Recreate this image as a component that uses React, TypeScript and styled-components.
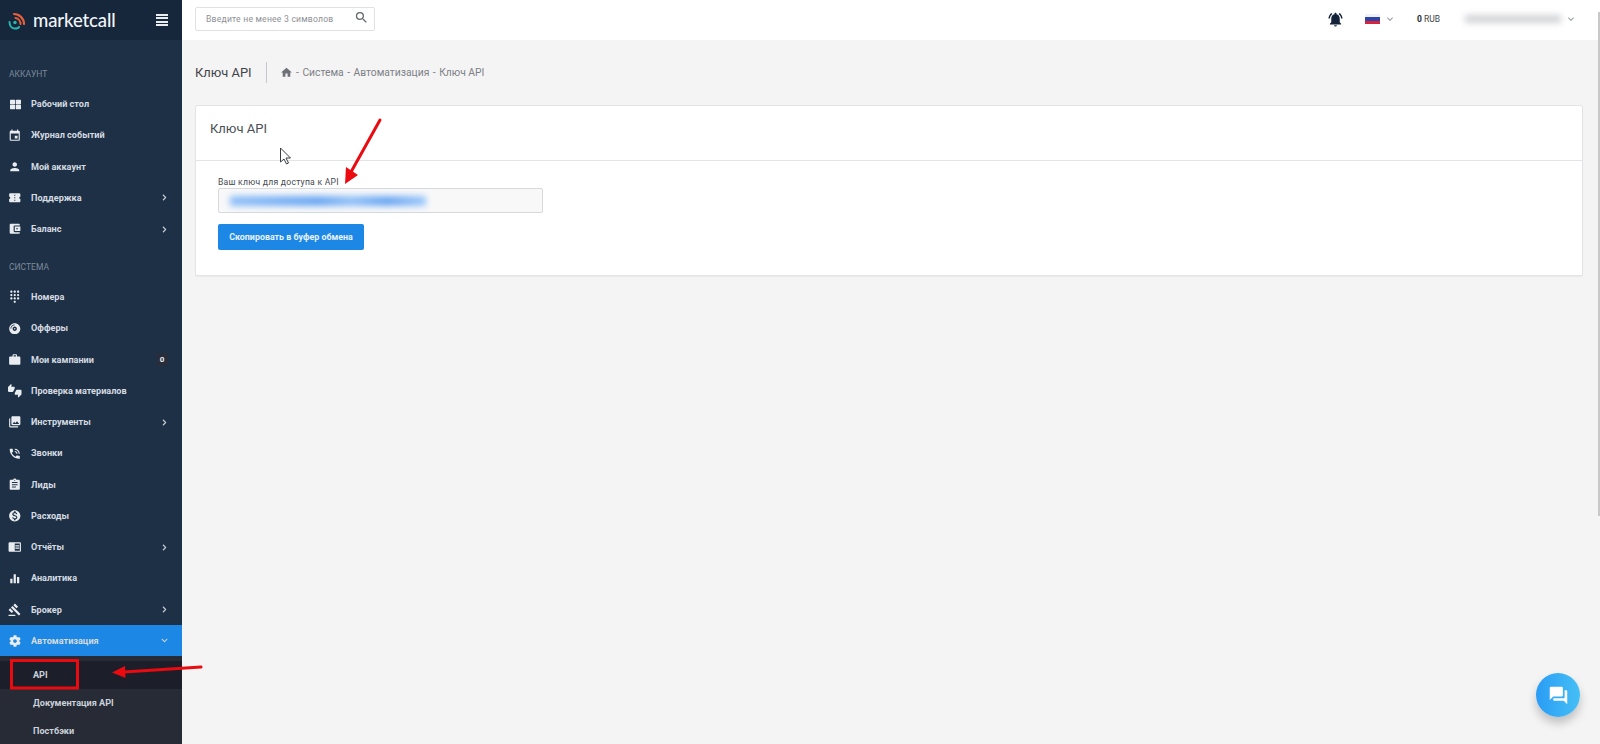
import React from "react";
import styled, { createGlobalStyle } from "styled-components";
import { FaThLarge, FaCompactDisc, FaCog, FaChevronRight, FaChevronDown } from "react-icons/fa";
import {
  MdEvent, MdPerson, MdDialpad, MdThumbsUpDown, MdPhotoLibrary, MdPhoneInTalk, MdAssignment,
  MdMonetizationOn, MdEqualizer, MdNotificationsActive, MdHome, MdSearch, MdQuestionAnswer, MdExpandMore,
  MdConfirmationNumber, MdAccountBalanceWallet, MdWork, MdChromeReaderMode, MdGavel,
} from "react-icons/md";

const GlobalStyle = createGlobalStyle`
  html, body { margin: 0; padding: 0; height: 100%; overflow: hidden; }
  body { font-family: Roboto, "Liberation Sans", sans-serif; background: #f4f4f4; }
`;

const Page = styled.div`
  position: relative;
  display: flex;
  width: 1600px;
  height: 744px;
  overflow: hidden;
`;

const Sidebar = styled.aside`
  width: 182px;
  flex-shrink: 0;
  height: 744px;
  overflow: hidden;
  background: #1e3045;
`;

const Brand = styled.div`
  display: flex;
  align-items: center;
  height: 40px;
  padding: 0 14px 0 8px;
  background: #16263b;
`;

const BrandName = styled.span`
  margin-left: 7px;
  flex: 1;
  font-family: Lato, sans-serif;
  font-size: 18.5px;
  font-weight: 500;
  letter-spacing: -0.1px;
  color: #f2f5f8;
`;

const Burger = styled.div`
  display: flex;
  flex-direction: column;
  gap: 1.5px;
  width: 12px;
  span { display: block; height: 2px; background: #e8ecf0; }
`;

const Nav = styled.nav`
  padding-top: 11.6px;
`;

const SectionLabel = styled.div`
  height: 36.8px;
  padding: 16px 0 0 9px;
  box-sizing: border-box;
  font-size: 8.5px;
  line-height: 12px;
  color: #7b8a9c;
`;

const Row = styled.div<{ $active?: boolean }>`
  display: flex;
  align-items: center;
  height: 31.25px;
  padding: 0 14px 0 8px;
  box-sizing: border-box;
  color: #d5dbe2;
  background: ${({ $active }) => ($active ? "#1c87e4" : "transparent")};
`;

const RowIcon = styled.span`
  display: flex;
  align-items: center;
  justify-content: center;
  width: 14px;
  height: 14px;
  margin-right: 9px;
  color: #e9edf1;
  font-size: 13.5px;
`;

const RowLabel = styled.span`
  flex: 1;
  font-size: 9.1px;
  font-weight: 700;
  white-space: nowrap;
  color: #d5dbe2;
`;

const Count = styled.span`
  width: 12px;
  height: 13px;
  border-radius: 2px;
  background: #282d3b;
  color: #eef0f3;
  font-size: 8px;
  font-weight: 700;
  line-height: 13px;
  text-align: center;
`;

const Caret = styled.span`
  display: flex;
  color: #ccd3db;
  font-size: 7px;
`;

const SubMenu = styled.div`
  padding-top: 5px;
  background: #262b36;
`;

const SubRow = styled.div<{ $active?: boolean }>`
  height: 28px;
  padding-left: 33px;
  font-size: 9.1px;
  font-weight: 700;
  line-height: 28px;
  color: #ccd2da;
  background: ${({ $active }) => ($active ? "#1c1f2a" : "transparent")};
`;

const Main = styled.main`
  flex: 1;
  min-width: 0;
  display: flex;
  flex-direction: column;
`;

const TopBar = styled.header`
  display: flex;
  align-items: center;
  height: 40px;
  padding: 0 23px 2px 13px;
  box-sizing: border-box;
  background: #fff;
`;

const SearchBox = styled.div`
  display: flex;
  align-items: center;
  justify-content: space-between;
  width: 180px;
  height: 24px;
  padding: 0 5px 0 10px;
  box-sizing: border-box;
  border: 1px solid #dfe1e5;
  border-radius: 2px;
  font-size: 8.6px;
  letter-spacing: 0.22px;
  color: #8d9096;
`;

const SearchIcon = styled.span`
  display: flex;
  margin-bottom: 4px;
  font-size: 15px;
  color: #63676d;
`;

const TopRight = styled.div`
  margin-left: auto;
  display: flex;
  align-items: center;
`;

const Bell = styled.span`
  display: flex;
  font-size: 17px;
  color: #15233a;
  margin-right: 21px;
`;

const Flag = styled.span`
  display: block;
  width: 15px;
  height: 10px;
  background: linear-gradient(#f1f1f4 0 33%, #2b46a8 33% 66%, #d8243a 66%);
`;

const SmallChevron = styled.span`
  display: flex;
  font-size: 12px;
  color: #999da3;
  margin-left: 4px;
`;

const Balance = styled.span`
  margin: 0 25px 0 21px;
  font-size: 8.5px;
  color: #3c4148;
  b { font-weight: 700; color: #25282d; }
`;

const BlurredEmail = styled.span`
  display: block;
  width: 96px;
  height: 8px;
  background: #d3d4d8;
  filter: blur(3px);
`;

const Content = styled.div`
  padding: 22px 17px 0 13px;
`;

const Breadcrumbs = styled.div`
  display: flex;
  align-items: center;
  height: 21px;
`;

const PageTitle = styled.h1`
  margin: 0;
  padding-right: 14px;
  border-right: 1px solid #c6c8cc;
  font-size: 12.9px;
  font-weight: 400;
  line-height: 21px;
  color: #3f4349;
`;

const Trail = styled.div`
  display: flex;
  align-items: center;
  margin-left: 13px;
  gap: 3.5px;
  font-size: 10.3px;
  color: #7d8086;
`;

const HomeIcon = styled.span`
  display: flex;
  font-size: 13px;
  color: #6e7177;
`;

const Card = styled.section`
  margin-top: 22px;
  height: 171px;
  box-sizing: border-box;
  background: #fff;
  border: 1px solid #e3e4e7;
  border-radius: 2px;
  box-shadow: 0 1px 1px rgba(0, 0, 0, 0.04);
`;

const CardHead = styled.div`
  display: flex;
  align-items: center;
  height: 55px;
  padding: 0 14px 9px;
  box-sizing: border-box;
  border-bottom: 1px solid #e3e4e7;
  font-size: 13px;
  color: #4a4e54;
`;

const CardBody = styled.div`
  padding: 15px 22px 0;
`;

const FieldLabel = styled.label`
  display: block;
  font-size: 8.6px;
  line-height: 12px;
  letter-spacing: 0.25px;
  color: #45494f;
`;

const KeyField = styled.div`
  display: flex;
  align-items: center;
  width: 325px;
  height: 25px;
  padding-left: 11px;
  box-sizing: border-box;
  background: #f8f8f9;
  border: 1px solid #d6d8dc;
  border-radius: 2px;
`;

const BlurredKey = styled.span`
  display: block;
  width: 196px;
  height: 10px;
  background: linear-gradient(90deg, #8fc0f8, #6aa6f2 45%, #8fc0f8 62%, #6aa6f2 80%, #9cc8fa);
  filter: blur(3px);
`;

const CopyButton = styled.button`
  display: block;
  width: 146px;
  height: 26px;
  margin-top: 11px;
  padding: 0;
  border: 0;
  border-radius: 2px;
  background: #1c87e4;
  color: #e8f2fc;
  font-family: inherit;
  font-size: 8.9px;
  font-weight: 700;
`;

const ChatBubble = styled.div`
  position: absolute;
  right: 20px;
  bottom: 27px;
  display: flex;
  align-items: center;
  justify-content: center;
  width: 44px;
  height: 44px;
  border-radius: 50%;
  background: linear-gradient(90deg, #2a9cf5, #45bff5);
  box-shadow: 0 6px 10px rgba(0, 0, 0, 0.22);
  color: #fff;
  font-size: 21px;
`;

const ScrollThumb = styled.div`
  position: absolute;
  right: 0;
  top: 12px;
  width: 2px;
  height: 504px;
  background: #c8c8c8;
`;

const Annotations = styled.svg`
  position: absolute;
  left: 0;
  top: 0;
  pointer-events: none;
`;

const account = [
  { label: "Рабочий стол", icon: <FaThLarge size={11} /> },
  { label: "Журнал событий", icon: <MdEvent /> },
  { label: "Мой аккаунт", icon: <MdPerson /> },
  { label: "Поддержка", icon: <MdConfirmationNumber />, more: true },
  { label: "Баланс", icon: <MdAccountBalanceWallet />, more: true },
];

const system = [
  { label: "Номера", icon: <MdDialpad /> },
  { label: "Офферы", icon: <FaCompactDisc size={11.5} /> },
  { label: "Мои кампании", icon: <MdWork />, count: 0 },
  { label: "Проверка материалов", icon: <MdThumbsUpDown /> },
  { label: "Инструменты", icon: <MdPhotoLibrary />, more: true },
  { label: "Звонки", icon: <MdPhoneInTalk /> },
  { label: "Лиды", icon: <MdAssignment /> },
  { label: "Расходы", icon: <MdMonetizationOn /> },
  { label: "Отчёты", icon: <MdChromeReaderMode />, more: true },
  { label: "Аналитика", icon: <MdEqualizer /> },
  { label: "Брокер", icon: <MdGavel />, more: true },
];

type Item = { label: string; icon: React.ReactNode; more?: boolean; count?: number };

const MenuRow = ({ label, icon, more, count }: Item) => (
  <Row>
    <RowIcon>{icon}</RowIcon>
    <RowLabel>{label}</RowLabel>
    {count !== undefined && <Count>{count}</Count>}
    {more && <Caret><FaChevronRight /></Caret>}
  </Row>
);

export default function App() {
  return (
    <Page>
      <GlobalStyle />
      <Sidebar>
        <Brand>
          <svg width="18" height="19" viewBox="0 0 18 19" fill="none">
            <path d="M6 3 A10 10 0 0 1 16 13" stroke="#e8603c" strokeWidth="2.2" strokeLinecap="round" />
            <path d="M7.5 7 A6 6 0 0 1 12.5 13" stroke="#e8603c" strokeWidth="2" strokeLinecap="round" />
            <path d="M1.5 11 C1.5 15 4 17.5 7 17.5 C9 17.5 10.5 17 11 16" stroke="#2bb5b0" strokeWidth="2" strokeLinecap="round" />
            <circle cx="7" cy="11.5" r="1.7" fill="#2bb5b0" />
          </svg>
          <BrandName>marketcall</BrandName>
          <Burger><span /><span /><span /><span /></Burger>
        </Brand>
        <Nav>
          <SectionLabel>АККАУНТ</SectionLabel>
          {account.map((item) => <MenuRow key={item.label} {...item} />)}
          <SectionLabel>СИСТЕМА</SectionLabel>
          {system.map((item) => <MenuRow key={item.label} {...item} />)}
          <Row $active>
            <RowIcon><FaCog size={12} /></RowIcon>
            <RowLabel>Автоматизация</RowLabel>
            <Caret><FaChevronDown /></Caret>
          </Row>
          <SubMenu>
            <SubRow $active>API</SubRow>
            <SubRow>Документация API</SubRow>
            <SubRow>Постбэки</SubRow>
          </SubMenu>
        </Nav>
      </Sidebar>

      <Main>
        <TopBar>
          <SearchBox>
            Введите не менее 3 символов
            <SearchIcon><MdSearch /></SearchIcon>
          </SearchBox>
          <TopRight>
            <Bell><MdNotificationsActive /></Bell>
            <Flag />
            <SmallChevron><MdExpandMore /></SmallChevron>
            <Balance><b>0</b> RUB</Balance>
            <BlurredEmail />
            <SmallChevron><MdExpandMore /></SmallChevron>
          </TopRight>
        </TopBar>
        <Content>
          <Breadcrumbs>
            <PageTitle>Ключ API</PageTitle>
            <Trail>
              <HomeIcon><MdHome /></HomeIcon>
              <span>-</span>
              <span>Система</span>
              <span>-</span>
              <span>Автоматизация</span>
              <span>-</span>
              <span>Ключ API</span>
            </Trail>
          </Breadcrumbs>
          <Card>
            <CardHead>Ключ API</CardHead>
            <CardBody>
              <FieldLabel>Ваш ключ для доступа к API</FieldLabel>
              <KeyField><BlurredKey /></KeyField>
              <CopyButton>Скопировать в буфер обмена</CopyButton>
            </CardBody>
          </Card>
        </Content>
      </Main>

      <ScrollThumb />
      <ChatBubble><MdQuestionAnswer /></ChatBubble>

      <Annotations width="1600" height="744" viewBox="0 0 1600 744" fill="none">
        <path d="M380 120 L351 172" stroke="#ea0a0f" strokeWidth="3" strokeLinecap="round" />
        <path d="M345 184 L346 167 L358 175 Z" fill="#ea0a0f" />
        <path d="M201 667 L124 672" stroke="#ea0a0f" strokeWidth="3" strokeLinecap="round" />
        <path d="M112 672.5 L125 666 L125.5 678 Z" fill="#ea0a0f" />
        <rect x="11.5" y="660.5" width="66" height="27.5" stroke="#ea0a0f" strokeWidth="3" />
        <path d="M280.5 148 L280.5 162 L284 159 L286.5 164 L288.5 163 L286 158 L290.5 158 Z" fill="#fff" stroke="#3a3d42" strokeWidth="1" />
      </Annotations>
    </Page>
  );
}
